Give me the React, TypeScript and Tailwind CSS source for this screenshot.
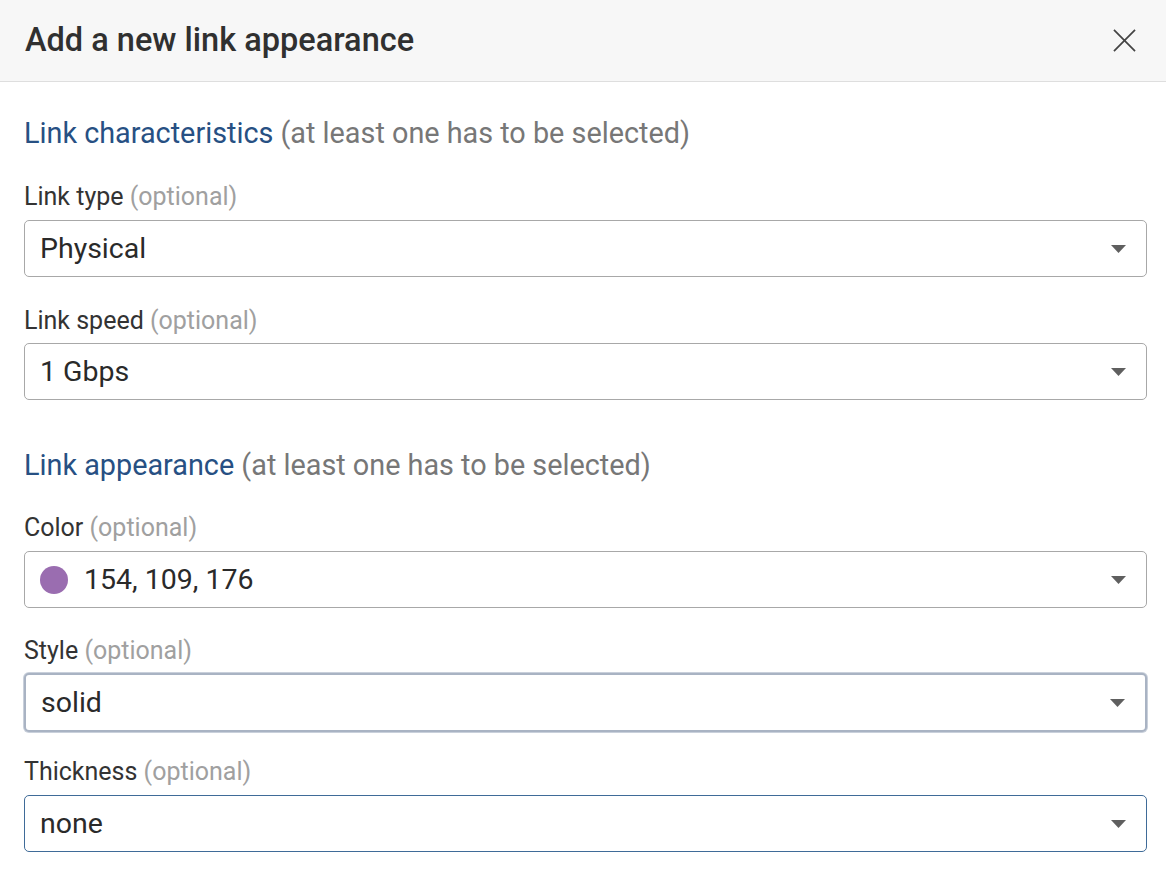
import React from "react";

const font = { fontFamily: "Roboto, 'Noto Sans', Arial, sans-serif" };

function Caret() {
  return (
    <svg width="15" height="8" viewBox="0 0 15 8" className="shrink-0">
      <path d="M0 0 L15 0 L7.5 8 Z" fill="#5f5f5f" />
    </svg>
  );
}

function Label({ name }: { name: string }) {
  return (
    <div className="h-[32px] leading-[32px] text-[25px] text-[#333]">
      {name} <span className="text-[#a0a0a0]">(optional)</span>
    </div>
  );
}

function Select({
  value,
  variant = "normal",
  dot,
}: {
  value: string;
  variant?: "normal" | "focus" | "active";
  dot?: string;
}) {
  const border =
    variant === "focus"
      ? "border-2 border-[#a9b3c3] shadow-[0_0_0_1px_#c9d0db] h-[59px]"
      : variant === "active"
      ? "border border-[#3f6b98] h-[57px]"
      : "border border-[#a8a8a8] h-[57px]";
  return (
    <div
      className={`flex items-center rounded-[5px] bg-white pl-[15px] pr-[20px] ${border}`}
    >
      {dot && (
        <span
          className="mr-[16px] h-[28px] w-[28px] shrink-0 rounded-full"
          style={{ backgroundColor: dot }}
        />
      )}
      <span className="flex-1 text-[28.5px] leading-[34px] text-[#2a2a2a]">{value}</span>
      <Caret />
    </div>
  );
}

function Heading({ main }: { main: string }) {
  return (
    <div className="h-[36px] leading-[36px] text-[28.8px]">
      <span className="text-[#275083]">{main}</span>{" "}
      <span className="text-[#777]">(at least one has to be selected)</span>
    </div>
  );
}

export default function App() {
  return (
    <div className="min-h-[894px] w-[1166px] bg-white" style={font}>
      <div className="flex h-[82px] items-center justify-between border-b border-[#dedede] bg-[#f7f7f7] pl-[25px] pr-[30px]">
        <h1 className="text-[32.5px] font-medium text-[#303030]">
          Add a new link appearance
        </h1>
        <svg width="23" height="23" viewBox="0 0 24 24">
          <path
            d="M1 1 L23 23 M23 1 L1 23"
            stroke="#444"
            strokeWidth="1.8"
            fill="none"
          />
        </svg>
      </div>
      <div className="pl-[24px] pr-[19px] pt-[33px]">
        <Heading main="Link characteristics" />
        <div className="mt-[30px]">
          <Label name="Link type" />
          <div className="mt-[7px]">
            <Select value="Physical" />
          </div>
        </div>
        <div className="mt-[28px]">
          <Label name="Link speed" />
          <div className="mt-[6px]">
            <Select value="1 Gbps" />
          </div>
        </div>
        <div className="mt-[47px]">
          <Heading main="Link appearance" />
        </div>
        <div className="mt-[29px]">
          <Label name="Color" />
          <div className="mt-[7px]">
            <Select value="154, 109, 176" dot="rgb(154,109,176)" />
          </div>
        </div>
        <div className="mt-[27px]">
          <Label name="Style" />
          <div className="mt-[6px]">
            <Select value="solid" variant="focus" />
          </div>
        </div>
        <div className="mt-[24px]">
          <Label name="Thickness" />
          <div className="mt-[7px]">
            <Select value="none" variant="active" />
          </div>
        </div>
      </div>
    </div>
  );
}
